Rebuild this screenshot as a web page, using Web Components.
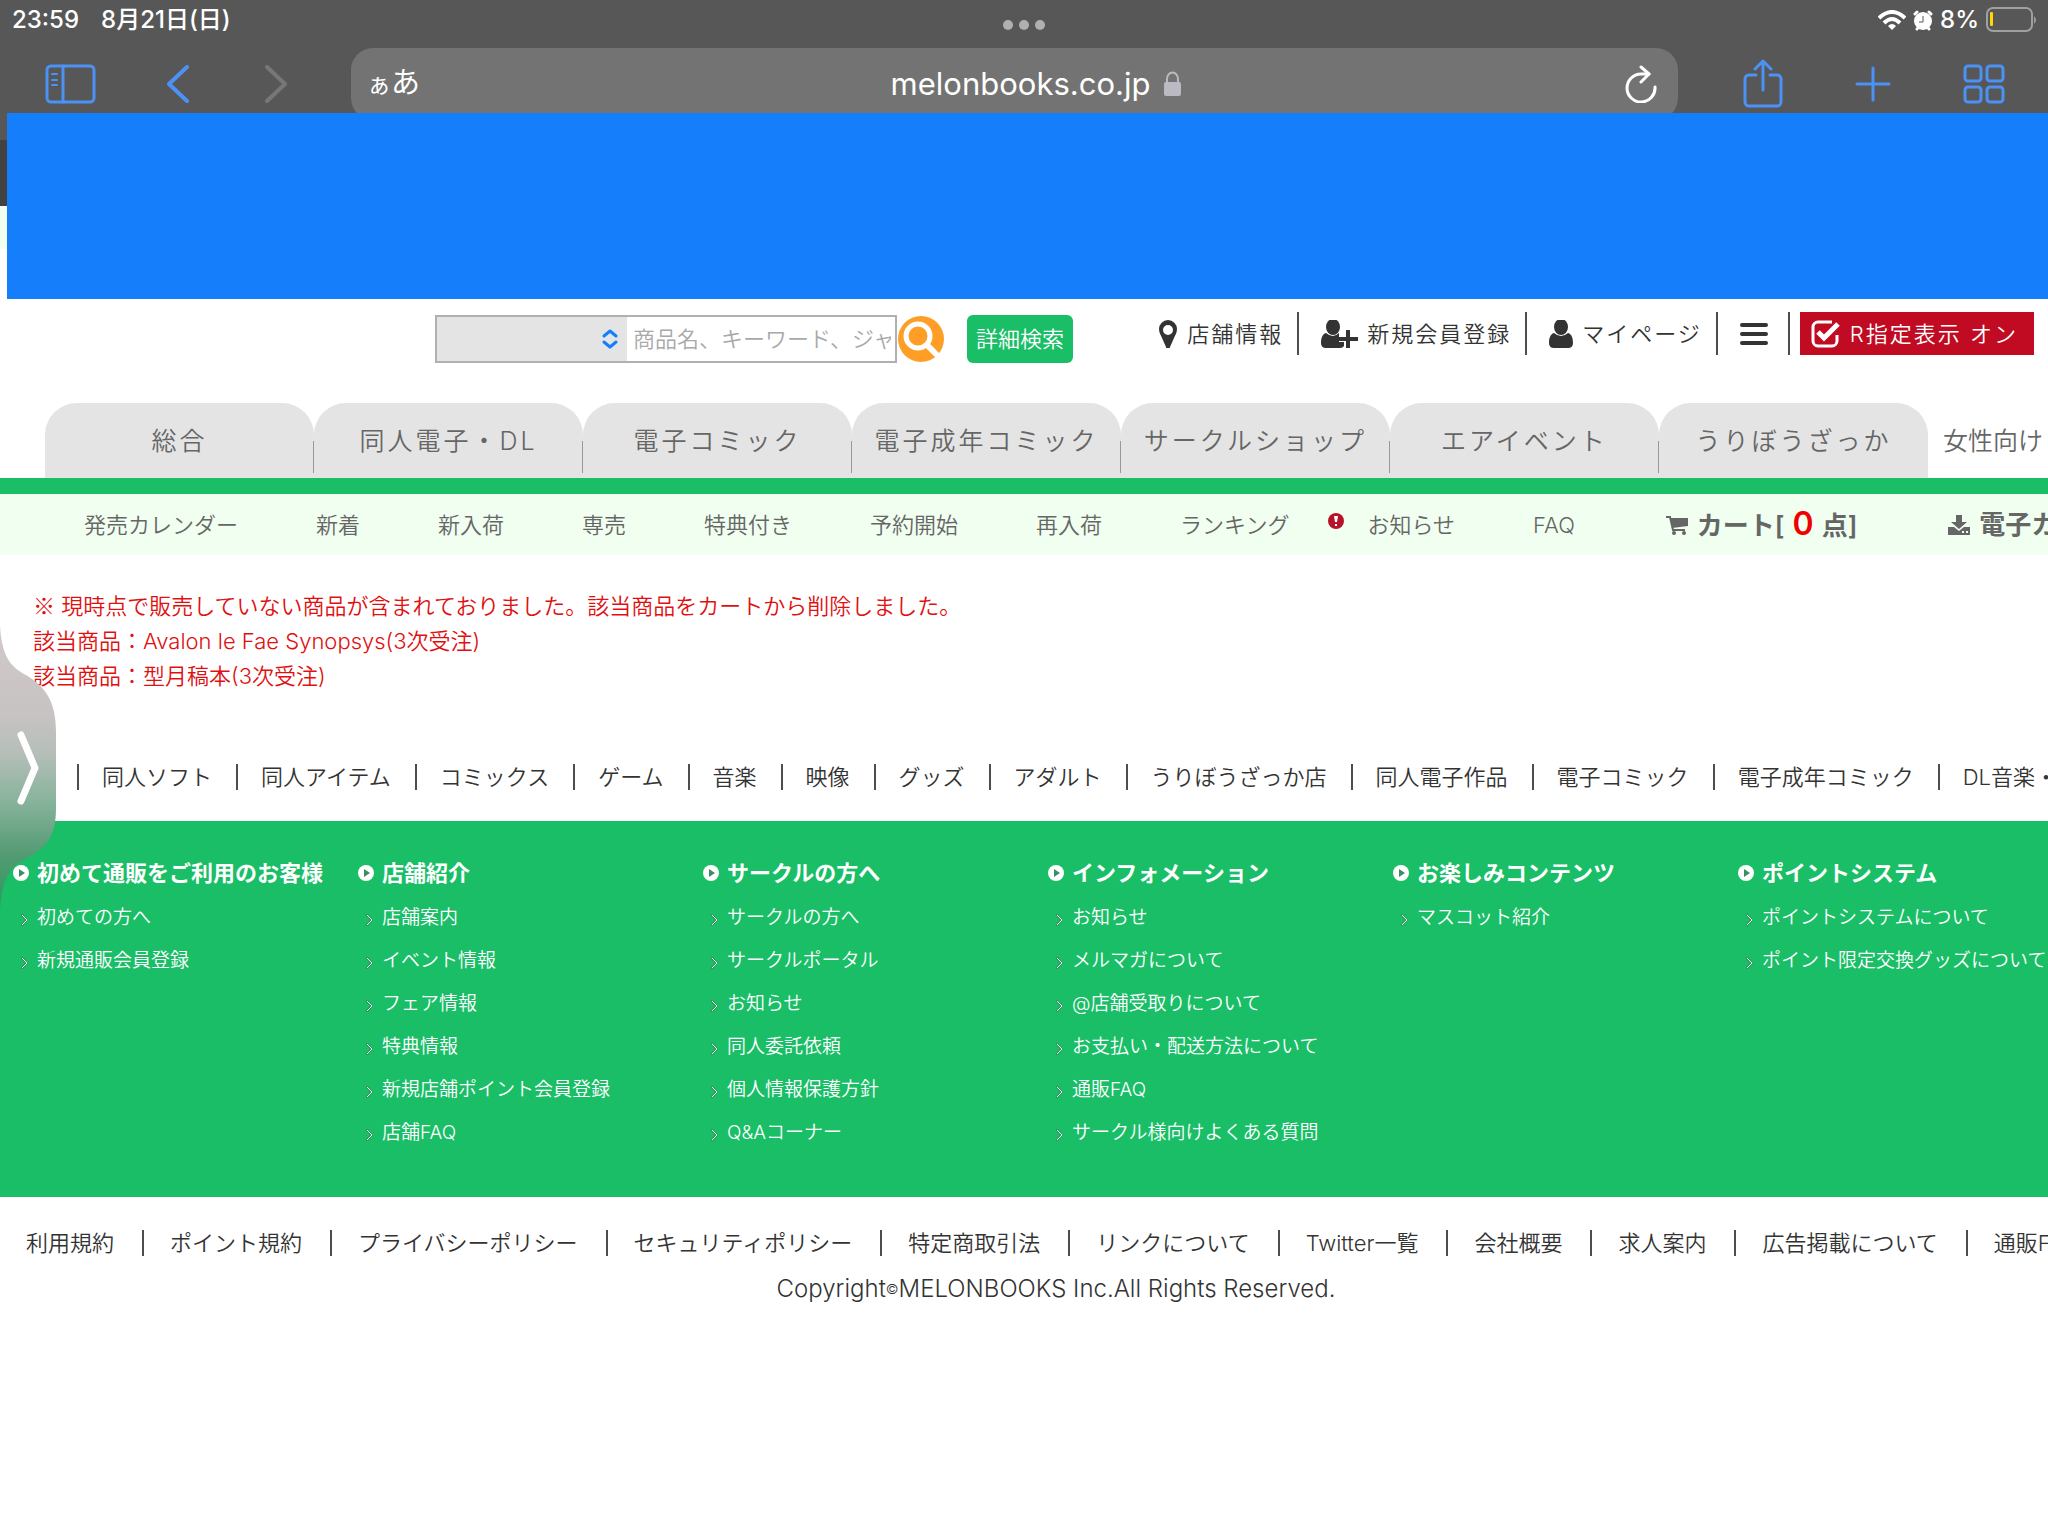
<!DOCTYPE html>
<html lang="ja">
<head>
<meta charset="utf-8">
<meta name="viewport" content="width=device-width, initial-scale=1">
<title>メロンブックス</title>
<style>
    :root {
        --green: #19be67;
        --mint: #f0fff0;
        --chrome: #575757;
        --accent: #4c92f5;
        --text: #333333;
        --rule: #4d4d4d;
        --muted: #666666;
    }
    html {
        overflow-x: hidden;
    }
    body {
        margin: 0;
        position: relative;
        min-height: 100vh;
        overflow-x: hidden;
        background: #ffffff;
        color: var(--text);
        font-family: Inter, "Noto Sans CJK JP", sans-serif;
        font-size: 22px;
        font-weight: 350;
        line-height: 32px;
    }
    .mark {
        font-family: "Noto Sans CJK JP", sans-serif;
    }
</style>
</head>
<body>

<browser-bar></browser-bar>
<page-banner></page-banner>

<site-header>
    <site-search slot="search"></site-search>
    <account-link icon="pin">店舗情報</account-link>
    <account-link icon="user-plus">新規会員登録</account-link>
    <account-link icon="user">マイページ</account-link>
    <account-link icon="menu" label="メニュー"></account-link>
    <rating-toggle>R指定表示 オン</rating-toggle>
</site-header>

<site-tabs>
    <a href="#">総合</a>
    <a href="#">同人電子・DL</a>
    <a href="#">電子コミック</a>
    <a href="#">電子成年コミック</a>
    <a href="#">サークルショップ</a>
    <a href="#">エアイベント</a>
    <a href="#">うりぼうざっか</a>
    <a href="#" slot="extra">女性向け</a>
</site-tabs>

<sub-nav></sub-nav>

<cart-notice>
    <p><span class="mark">※</span> 現時点で販売していない商品が含まれておりました。該当商品をカートから削除しました。</p>
    <p>該当商品：Avalon le Fae Synopsys(3次受注)</p>
    <p>該当商品：型月稿本(3次受注)</p>
</cart-notice>

<link-row class="categories">
    <a href="#">同人ソフト</a>
    <a href="#">同人アイテム</a>
    <a href="#">コミックス</a>
    <a href="#">ゲーム</a>
    <a href="#">音楽</a>
    <a href="#">映像</a>
    <a href="#">グッズ</a>
    <a href="#">アダルト</a>
    <a href="#">うりぼうざっか店</a>
    <a href="#">同人電子作品</a>
    <a href="#">電子コミック</a>
    <a href="#">電子成年コミック</a>
    <a href="#">DL音楽・</a>
</link-row>

<site-guide>
    <guide-column heading="初めて通販をご利用のお客様">
        <a href="#">初めての方へ</a>
        <a href="#">新規通販会員登録</a>
    </guide-column>
    <guide-column heading="店舗紹介">
        <a href="#">店舗案内</a>
        <a href="#">イベント情報</a>
        <a href="#">フェア情報</a>
        <a href="#">特典情報</a>
        <a href="#">新規店舗ポイント会員登録</a>
        <a href="#">店舗FAQ</a>
    </guide-column>
    <guide-column heading="サークルの方へ">
        <a href="#">サークルの方へ</a>
        <a href="#">サークルポータル</a>
        <a href="#">お知らせ</a>
        <a href="#">同人委託依頼</a>
        <a href="#">個人情報保護方針</a>
        <a href="#">Q&amp;Aコーナー</a>
    </guide-column>
    <guide-column heading="インフォメーション">
        <a href="#">お知らせ</a>
        <a href="#">メルマガについて</a>
        <a href="#">@店舗受取りについて</a>
        <a href="#">お支払い・配送方法について</a>
        <a href="#">通販FAQ</a>
        <a href="#">サークル様向けよくある質問</a>
    </guide-column>
    <guide-column heading="お楽しみコンテンツ">
        <a href="#">マスコット紹介</a>
    </guide-column>
    <guide-column heading="ポイントシステム">
        <a href="#">ポイントシステムについて</a>
        <a href="#">ポイント限定交換グッズについて</a>
    </guide-column>
</site-guide>

<site-footer>
    <link-row class="legal">
        <a href="#">利用規約</a>
        <a href="#">ポイント規約</a>
        <a href="#">プライバシーポリシー</a>
        <a href="#">セキュリティポリシー</a>
        <a href="#">特定商取引法</a>
        <a href="#">リンクについて</a>
        <a href="#">Twitter一覧</a>
        <a href="#">会社概要</a>
        <a href="#">求人案内</a>
        <a href="#">広告掲載について</a>
        <a href="#">通販FAQ</a>
    </link-row>
</site-footer>

<side-handle></side-handle>

<script>
const stroke = (width, body) =>
    `<g fill="none" stroke="currentColor" stroke-width="${width}" stroke-linecap="round" stroke-linejoin="round">${body}</g>`;

// name: [width, height, markup]
const ICONS = {
    sidebar: [52, 40, stroke(3, `
        <rect x="2" y="2" width="47" height="36" rx="4"/>
        <path d="M18 2V38"/>`) + stroke(2, '<path d="M7 10h5M7 16h5M7 21h5"/>')],
    back: [24, 38, stroke(4, '<path d="M20 2L2 19L20 36"/>')],
    forward: [24, 38, stroke(4, '<path d="M4 2L22 19L4 36"/>')],
    lock: [18, 26, `
        <rect x="0" y="11" width="17" height="14" rx="2" fill="currentColor"/>
        <path d="M3 12V8a5 6 0 0 1 11 0V12" fill="none" stroke="currentColor" stroke-width="2"/>`],
    reload: [34, 38, stroke(3, `
        <path d="M25 9H17A14 14 0 1 0 31 22"/>
        <path d="M17 2L25 9L17 17"/>`)],
    share: [40, 50, stroke(3, `
        <path d="M13 16H6a4 4 0 0 0-4 4V43a4 4 0 0 0 4 4H34a4 4 0 0 0 4-4V20a4 4 0 0 0-4-4H27"/>
        <path d="M20 31V2M12 10L20 2L28 10"/>`)],
    plus: [38, 38, stroke(3, '<path d="M19 3V35M3 19H35"/>')],
    grid: [42, 40, stroke(3, `
        <rect x="2" y="2" width="16" height="15" rx="3"/>
        <rect x="24" y="2" width="16" height="15" rx="3"/>
        <rect x="2" y="23" width="16" height="15" rx="3"/>
        <rect x="24" y="23" width="16" height="15" rx="3"/>`)],
    wifi: [28, 21, `
        <g fill="none" stroke="currentColor" stroke-width="4">
            <path d="M1 8Q14-4 27 8"/>
            <path d="M6 13Q14 5 22 13"/>
        </g>
        <path d="M10 16Q14 12 18 16L14 20Z" fill="currentColor"/>`],
    alarm: [20, 21, `
        <circle cx="10" cy="11" r="9" fill="currentColor"/>
        <path d="M2 4L4 2M18 4L16 2M4 19L5 18M16 19L15 18" stroke="currentColor" stroke-width="3" stroke-linecap="round"/>
        <path d="M10 6V12H6" fill="none" stroke="#575757" stroke-width="1"/>`],
    battery: [50, 26, `
        <rect x="1" y="1" width="45" height="23" rx="6" fill="none" stroke="#a0a0a0" stroke-width="2"/>
        <path d="M48 9q4 4 0 8z" fill="#a0a0a0"/>
        <rect x="4" y="5" width="3" height="14" rx="1" fill="#ffd60a"/>`],
    updown: [16, 20, stroke(3, '<path d="M2 7L8 2L14 7M2 13L8 18L14 13"/>')],
    search: [47, 48, `
        <circle cx="23" cy="24" r="23" fill="#ff9e26"/>
        <circle cx="20" cy="21" r="12" fill="none" stroke="#ffffff" stroke-width="5"/>
        <path d="M29 30L38 39" stroke="#ffffff" stroke-width="6" stroke-linecap="round"/>`],
    pin: [20, 28, `<path fill="currentColor" fill-rule="evenodd"
        d="M10 0a9 9 0 0 1 9 9c0 4-2 6-3 9l-4 9a2 2 0 0 1-4 0l-4-9c-1-3-3-5-3-9a9 9 0 0 1 9-9zm0 5a5 5 0 0 0 0 10a5 5 0 0 0 0-10z"/>`],
    user: [24, 28, `<g fill="currentColor">
        <ellipse cx="12" cy="7" rx="7" ry="8"/>
        <path d="M5 13q7 6 14 0c4 1 5 6 5 10q0 5-5 5H5q-5 0-5-5c0-4 1-9 5-10z"/></g>`],
    'user-plus': [37, 28, `<g fill="currentColor">
        <ellipse cx="12" cy="7" rx="7" ry="8"/>
        <path d="M5 13q7 6 13 0v5h5v8q-1 2-4 2H5q-5 0-5-5c0-4 1-9 5-10z"/></g>
        <path d="M27 10V28M18 19H37" stroke="#ffffff" stroke-width="6"/>
        <path d="M27 10V28M18 19H37" stroke="currentColor" stroke-width="4"/>`],
    menu: [28, 24, '<path d="M2 3H26M2 12H26M2 21H26" stroke="currentColor" stroke-width="4" stroke-linecap="round"/>'],
    check: [30, 28, `
        <path d="M26 15v6a5 5 0 0 1-5 5H7a5 5 0 0 1-5-5V7a5 5 0 0 1 5-5H21" fill="none" stroke="currentColor" stroke-width="3"/>
        <path d="M7 12L13 18L27 4" fill="none" stroke="currentColor" stroke-width="5"/>`],
    alert: [16, 16, `
        <circle cx="8" cy="8" r="8" fill="#b8122b"/>
        <path d="M6 3H10L9 9H7ZM7 11H9V13H7Z" fill="#ffffff"/>`],
    cart: [22, 20, `
        <path d="M0 2H4L7 15H19" fill="none" stroke="currentColor" stroke-width="2"/>
        <path d="M4 3H22V11L6 13Z" fill="currentColor"/>
        <circle cx="8" cy="18" r="2" fill="currentColor"/>
        <circle cx="18" cy="18" r="2" fill="currentColor"/>`],
    download: [22, 20, `
        <path d="M8 0H14V7H19L11 14L3 7H8Z" fill="currentColor"/>
        <path d="M0 12H6L11 16L16 12H22V20H0Z" fill="currentColor"/>
        <path d="M14 17H16M18 17H20" stroke="#f0fff0" stroke-width="2"/>`],
    bullet: [16, 16, `
        <circle cx="8" cy="8" r="8" fill="#ffffff"/>
        <path d="M6 4L12 8L6 12Z" fill="#3a8f60"/>`],
    arrow: [7, 12, `
        <path d="M0 0H2L7 6L2 12H0V10L4 6L0 2Z" fill="#35955f"/>
        <path d="M1 1L6 6L1 11" fill="none" stroke="#e6faef" stroke-width="1"/>`]
};

class UiIcon extends HTMLElement {

    constructor() {
        super();
        this.attachShadow({mode: 'open'});
    }

    connectedCallback() {
        const [width, height, body] = ICONS[this.getAttribute('name')];

        this.shadowRoot.innerHTML = `
            <style>
                :host {
                    display: inline-flex;
                    flex: none;
                }
            </style>
            <svg width="${width}" height="${height}" viewBox="0 0 ${width} ${height}" aria-hidden="true">${body}</svg>
        `;
    }
}

customElements.define('ui-icon', UiIcon);

class BrowserBar extends HTMLElement {

    constructor() {
        super();

        this.attachShadow({mode: 'open'}).innerHTML = `
            <style>
                :host {
                    display: block;
                    height: 113px;
                    overflow: hidden;
                    background: var(--chrome);
                    color: #ffffff;
                    font-weight: 400;
                }
                .status {
                    display: grid;
                    grid-template-columns: 1fr auto 1fr;
                    align-items: center;
                    height: 40px;
                    padding: 0 12px;
                    font-size: 24px;
                    font-weight: 500;
                }
                .clock {
                    display: flex;
                    gap: 22px;
                }
                .dots {
                    display: flex;
                    gap: 6px;
                    padding-top: 10px;
                }
                .dots i {
                    width: 10px;
                    height: 10px;
                    border-radius: 50%;
                    background: #b0b0b0;
                }
                .system {
                    display: flex;
                    align-items: center;
                    justify-content: flex-end;
                    gap: 7px;
                }
                .toolbar {
                    display: flex;
                    align-items: flex-start;
                    padding: 8px 43px 0 45px;
                }
                button {
                    display: flex;
                    align-items: center;
                    justify-content: center;
                    height: 72px;
                    padding: 0;
                    border: 0;
                    background: none;
                    color: var(--accent);
                    font: inherit;
                }
                button[disabled] {
                    color: #777777;
                }
                .left, .right {
                    display: flex;
                }
                .left {
                    gap: 70px;
                    margin-right: 64px;
                }
                .left button:last-child {
                    margin-left: 2px;
                }
                .right {
                    gap: 71px;
                    margin-left: 65px;
                }
                .address {
                    flex: 1;
                    display: grid;
                    grid-template-columns: 1fr auto 1fr;
                    align-items: center;
                    height: 72px;
                    padding: 0 20px 0 16px;
                    box-sizing: border-box;
                    border-radius: 22px;
                    background: #737373;
                }
                .address button {
                    color: #ffffff;
                    height: auto;
                }
                .reader {
                    justify-self: start;
                    align-items: baseline;
                }
                .reader .small {
                    font-size: 24px;
                }
                .reader .large {
                    font-size: 29px;
                }
                .reload {
                    justify-self: end;
                }
                .site {
                    display: flex;
                    align-items: center;
                    gap: 14px;
                    font-size: 31px;
                    padding-left: 48px;
                }
                .site ui-icon {
                    color: #bbb9c2;
                }
            </style>
            <div class="status">
                <div class="clock"><span>23:59</span><span>8月21日(日)</span></div>
                <div class="dots"><i></i><i></i><i></i></div>
                <div class="system">
                    <ui-icon name="wifi"></ui-icon>
                    <ui-icon name="alarm"></ui-icon>
                    <span>8%</span>
                    <ui-icon name="battery"></ui-icon>
                </div>
            </div>
            <div class="toolbar">
                <div class="left">
                    <button aria-label="サイドバー"><ui-icon name="sidebar"></ui-icon></button>
                    <button aria-label="戻る"><ui-icon name="back"></ui-icon></button>
                    <button aria-label="進む" disabled><ui-icon name="forward"></ui-icon></button>
                </div>
                <div class="address">
                    <button class="reader"><span class="small">ぁ</span><span class="large">あ</span></button>
                    <div class="site"><span>melonbooks.co.jp</span><ui-icon name="lock"></ui-icon></div>
                    <button class="reload" aria-label="再読み込み"><ui-icon name="reload"></ui-icon></button>
                </div>
                <div class="right">
                    <button aria-label="共有"><ui-icon name="share"></ui-icon></button>
                    <button aria-label="新規タブ"><ui-icon name="plus"></ui-icon></button>
                    <button aria-label="タブ一覧"><ui-icon name="grid"></ui-icon></button>
                </div>
            </div>
        `;
    }
}

customElements.define('browser-bar', BrowserBar);

class PageBanner extends HTMLElement {

    constructor() {
        super();

        // the strip left of the banner shows the page edges behind it
        this.attachShadow({mode: 'open'}).innerHTML = `
            <style>
                :host {
                    display: block;
                    padding-left: 7px;
                    background: linear-gradient(
                        var(--chrome) 27px, #424242 27px, #424242 93px,
                        var(--mint) 93px, var(--mint) 136px, #ffffff 136px
                    );
                }
                div {
                    height: 186px;
                    background: #157efb;
                }
            </style>
            <div></div>
        `;
    }
}

customElements.define('page-banner', PageBanner);

class SiteHeader extends HTMLElement {

    constructor() {
        super();

        this.attachShadow({mode: 'open'}).innerHTML = `
            <style>
                :host {
                    display: flex;
                    justify-content: space-between;
                    align-items: flex-start;
                    height: 91px;
                    padding: 13px 14px 0 435px;
                }
                nav {
                    display: flex;
                }
            </style>
            <slot name="search"></slot>
            <nav><slot></slot></nav>
        `;
    }
}

customElements.define('site-header', SiteHeader);

class SiteSearch extends HTMLElement {

    constructor() {
        super();

        this.attachShadow({mode: 'open'}).innerHTML = `
            <style>
                :host {
                    display: block;
                    padding-top: 3px;
                }
                form {
                    display: flex;
                    height: 48px;
                }
                select, input, button {
                    box-sizing: border-box;
                    margin: 0;
                    border-radius: 0;
                    font: inherit;
                }
                .genre {
                    display: grid;
                    width: 192px;
                }
                .genre > * {
                    grid-area: 1 / 1;
                }
                .genre ui-icon {
                    place-self: center end;
                    margin-right: 9px;
                    color: #157efb;
                    pointer-events: none;
                }
                select {
                    appearance: none;
                    border: 2px solid #b0b0b0;
                    border-right: 0;
                    background: #e4e4e4;
                }
                input {
                    width: 270px;
                    padding: 0 4px 0 6px;
                    border: 2px solid #b0b0b0;
                    border-left: 0;
                }
                input::placeholder {
                    color: #a9a9a9;
                }
                .go {
                    padding: 0 1px;
                    border: 0;
                    background: none;
                }
                .detail {
                    margin-left: 21px;
                    padding: 0 9px;
                    border: 0;
                    border-radius: 6px;
                    background: var(--green);
                    color: #ffffff;
                    white-space: nowrap;
                }
            </style>
            <form>
                <div class="genre">
                    <select aria-label="ジャンル"><option></option></select>
                    <ui-icon name="updown"></ui-icon>
                </div>
                <input type="text" aria-label="検索" placeholder="商品名、キーワード、ジャンル">
                <button class="go" type="button" aria-label="検索する"><ui-icon name="search"></ui-icon></button>
                <button class="detail" type="button">詳細検索</button>
            </form>
        `;
    }
}

customElements.define('site-search', SiteSearch);

class AccountLink extends HTMLElement {

    constructor() {
        super();
        this.attachShadow({mode: 'open'});
    }

    connectedCallback() {
        const label = this.getAttribute('label');

        this.shadowRoot.innerHTML = `
            <style>
                :host {
                    display: flex;
                    height: 43px;
                    padding: 0 14px 0 22px;
                    border-right: 2px solid var(--rule);
                    white-space: nowrap;
                }
                :host([label]) {
                    padding-right: 20px;
                }
                a {
                    display: flex;
                    align-items: center;
                    gap: 9px;
                    color: inherit;
                    letter-spacing: 2px;
                    text-decoration: none;
                }
            </style>
            <a href="#"${label ? ` aria-label="${label}"` : ''}><ui-icon name="${this.getAttribute('icon')}"></ui-icon>${label ? '' : '<slot></slot>'}</a>
        `;
    }
}

customElements.define('account-link', AccountLink);

class RatingToggle extends HTMLElement {

    constructor() {
        super();

        this.attachShadow({mode: 'open'}).innerHTML = `
            <style>
                :host {
                    display: flex;
                    margin-left: 10px;
                }
                button {
                    display: flex;
                    align-items: center;
                    gap: 9px;
                    height: 43px;
                    padding: 0 16px 0 11px;
                    border: 0;
                    background: #c00b23;
                    color: #ffffff;
                    font: inherit;
                    letter-spacing: 2px;
                    white-space: nowrap;
                }
            </style>
            <button type="button"><ui-icon name="check"></ui-icon><span><slot></slot></span></button>
        `;
    }
}

customElements.define('rating-toggle', RatingToggle);

class SiteTabs extends HTMLElement {

    constructor() {
        super();

        this.attachShadow({mode: 'open'}).innerHTML = `
            <style>
                :host {
                    display: block;
                    overflow: hidden;
                    border-bottom: 16px solid var(--green);
                }
                nav {
                    display: flex;
                    padding-left: 45px;
                    white-space: nowrap;
                }
                ::slotted(a) {
                    flex: none;
                    box-sizing: border-box;
                    width: 269px;
                    height: 75px;
                    padding-top: 1px;
                    border-radius: 32px 32px 0 0;
                    background:
                        linear-gradient(#999999, #999999) 100% 38px / 1px 32px no-repeat,
                        #e4e4e4;
                    color: var(--muted);
                    font-size: 25px;
                    line-height: 74px;
                    letter-spacing: 3px;
                    text-align: center;
                    text-decoration: none;
                }
                ::slotted(a:nth-of-type(7)) {
                    background: #e4e4e4;
                }
                ::slotted(a[slot="extra"]) {
                    width: auto;
                    padding-left: 15px;
                    background: none;
                    letter-spacing: normal;
                }
            </style>
            <nav><slot></slot><slot name="extra"></slot></nav>
        `;
    }
}

customElements.define('site-tabs', SiteTabs);

class SubNav extends HTMLElement {

    constructor() {
        super();

        this.attachShadow({mode: 'open'}).innerHTML = `
            <style>
                :host {
                    display: block;
                    overflow: hidden;
                    background: var(--mint);
                }
                nav {
                    display: flex;
                    align-items: center;
                    gap: 78px;
                    height: 61px;
                    padding-left: 84px;
                    white-space: nowrap;
                }
                a {
                    flex: none;
                    color: var(--muted);
                    text-decoration: none;
                }
                .news {
                    position: relative;
                }
                .news ui-icon {
                    position: absolute;
                    top: 4px;
                    left: -39px;
                }
                .strong {
                    display: flex;
                    align-items: center;
                    gap: 9px;
                    margin-left: 13px;
                    font-size: 26px;
                    font-weight: 600;
                }
                b {
                    margin: 0 8px;
                    color: #f00000;
                    font-size: 32px;
                    font-weight: 600;
                }
            </style>
            <nav>
                <a href="#">発売カレンダー</a>
                <a href="#">新着</a>
                <a href="#">新入荷</a>
                <a href="#">専売</a>
                <a href="#">特典付き</a>
                <a href="#">予約開始</a>
                <a href="#">再入荷</a>
                <a href="#">ランキング</a>
                <a href="#" class="news"><ui-icon name="alert"></ui-icon>お知らせ</a>
                <a href="#">FAQ</a>
                <a href="#" class="strong"><ui-icon name="cart"></ui-icon><span>カート[<b>0</b>点]</span></a>
                <a href="#" class="strong"><ui-icon name="download"></ui-icon><span>電子カート</span></a>
            </nav>
        `;
    }
}

customElements.define('sub-nav', SubNav);

class CartNotice extends HTMLElement {

    constructor() {
        super();

        this.attachShadow({mode: 'open'}).innerHTML = `
            <style>
                :host {
                    display: block;
                    padding: 32px 33px 70px;
                    color: #e01010;
                    line-height: 35px;
                }
                ::slotted(p) {
                    margin: 0;
                }
            </style>
            <slot></slot>
        `;
    }
}

customElements.define('cart-notice', CartNotice);

class LinkRow extends HTMLElement {

    constructor() {
        super();

        this.attachShadow({mode: 'open'}).innerHTML = `
            <style>
                :host {
                    display: block;
                    overflow: hidden;
                }
                nav {
                    display: flex;
                    white-space: nowrap;
                }
                ::slotted(a) {
                    flex: none;
                    border-left: 2px solid var(--rule);
                    color: inherit;
                    line-height: 26px;
                    text-decoration: none;
                }
                :host(.categories) {
                    padding: 0 0 31px 77px;
                }
                :host(.categories) ::slotted(a) {
                    padding: 0 24px 0 23px;
                }
                :host(.legal) ::slotted(a) {
                    padding: 0 28px 0 26px;
                }
                :host(.legal) ::slotted(a:first-child) {
                    border-left: 0;
                }
            </style>
            <nav><slot></slot></nav>
        `;
    }
}

customElements.define('link-row', LinkRow);

class SiteGuide extends HTMLElement {

    constructor() {
        super();

        this.attachShadow({mode: 'open'}).innerHTML = `
            <style>
                :host {
                    display: grid;
                    grid-template-columns: repeat(6, 345px);
                    overflow: hidden;
                    padding: 36px 0 43px 13px;
                    background: var(--green);
                    color: #ffffff;
                    white-space: nowrap;
                }
            </style>
            <slot></slot>
        `;
    }
}

customElements.define('site-guide', SiteGuide);

class GuideColumn extends HTMLElement {

    constructor() {
        super();
        this.attachShadow({mode: 'open'});
    }

    connectedCallback() {
        const links = [...this.querySelectorAll('a')];

        this.shadowRoot.innerHTML = `
            <style>
                :host {
                    display: block;
                }
                h2 {
                    position: relative;
                    z-index: 1;
                    display: flex;
                    align-items: center;
                    gap: 8px;
                    margin: 0 0 7px;
                    font-size: 22px;
                    line-height: 32px;
                }
                ul {
                    margin: 0;
                    padding: 0;
                    list-style: none;
                }
                li {
                    display: flex;
                    align-items: center;
                    gap: 9px;
                    height: 43px;
                    padding-left: 8px;
                }
                li ui-icon {
                    padding-top: 4px;
                }
                ::slotted(a) {
                    color: inherit;
                    font-size: 19px;
                    text-decoration: none;
                }
            </style>
            <h2><ui-icon name="bullet"></ui-icon>${this.getAttribute('heading')}</h2>
            <ul>
                ${links.map((link, i) => `<li><ui-icon name="arrow"></ui-icon><slot name="link-${i}"></slot></li>`).join('')}
            </ul>
        `;

        links.forEach((link, i) => link.slot = `link-${i}`);
    }
}

customElements.define('guide-column', GuideColumn);

class SiteFooter extends HTMLElement {

    constructor() {
        super();

        this.attachShadow({mode: 'open'}).innerHTML = `
            <style>
                :host {
                    display: block;
                    padding-top: 33px;
                }
                p {
                    margin: 0;
                    padding: 17px 0 0 64px;
                    font-size: 24px;
                    text-align: center;
                }
                small {
                    font-size: 14px;
                    vertical-align: 3px;
                }
            </style>
            <slot></slot>
            <p>Copyright<small>©</small>MELONBOOKS Inc.All Rights Reserved.</p>
        `;
    }
}

customElements.define('site-footer', SiteFooter);

class SideHandle extends HTMLElement {

    constructor() {
        super();

        this.attachShadow({mode: 'open'}).innerHTML = `
            <style>
                :host {
                    position: absolute;
                    top: 626px;
                    left: 0;
                }
                svg {
                    display: block;
                }
            </style>
            <svg width="57" height="284" viewBox="0 0 57 284" aria-hidden="true">
                <defs>
                    <linearGradient id="shade" x1="0" y1="0" x2="0" y2="1">
                        <stop offset="0" stop-color="#d2c9c9"/>
                        <stop offset=".32" stop-color="#c6c3c2"/>
                        <stop offset=".45" stop-color="#b5beb8"/>
                        <stop offset=".62" stop-color="#87b39b"/>
                        <stop offset=".8" stop-color="#549b74"/>
                        <stop offset="1" stop-color="#2a9a5d"/>
                    </linearGradient>
                </defs>
                <path d="M0 0C2 30 10 40 24 48C46 60 56 76 56 106V182C56 212 46 222 24 234C8 242 2 256 0 284Z" fill="url(#shade)"/>
                <path d="M21 109L35 142L21 175" fill="none" stroke="#ffffff" stroke-width="7" stroke-linecap="round" stroke-linejoin="round"/>
            </svg>
        `;
    }
}

customElements.define('side-handle', SideHandle);
</script>
</body>
</html>
